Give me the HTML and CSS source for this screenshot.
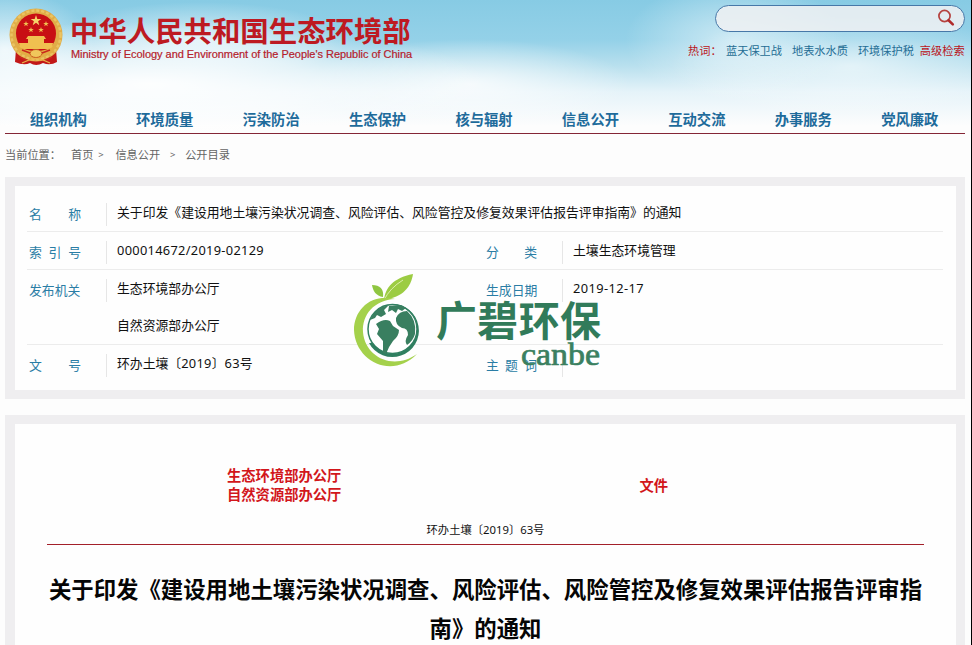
FILE: index.html
```html
<!DOCTYPE html>
<html lang="zh-CN">
<head>
<meta charset="utf-8">
<title>中华人民共和国生态环境部</title>
<link rel="stylesheet" href="styles.css">
</head>
<body>
<div class="page">
  <header class="header">
    <div class="masthead">
      <div class="brand">
        <svg class="emblem" viewBox="0 0 56 60" width="56" height="60" aria-hidden="true">
          <path d="M8 42 L7 55 Q16 59 22 56 Q28 60 35 56 Q42 59 49 55 L48 42 Z" fill="#c21818"/>
          <circle cx="28" cy="28" r="26.500" fill="#e0ad48"/>
          <circle cx="28" cy="28" r="24.500" fill="none" stroke="#ebc462" stroke-width="2.500" stroke-dasharray="3 2"/>
          <circle cx="28" cy="26.500" r="20" fill="#c80f14"/>
          <path d="M28 8l1.300 3.900h4.100l-3.300 2.400 1.200 3.900-3.300-2.400-3.300 2.400 1.200-3.900-3.300-2.400h4.100z" fill="#f6d56b"/>
          <g fill="#f0c050">
            <path id="s" d="M18 14l.7 1.900h2.100l-1.700 1.300.7 2-1.800-1.200-1.800 1.200.7-2-1.700-1.300h2.100z"/>
            <use href="#s" x="20"/><use href="#s" x="5" y="6"/><use href="#s" x="15" y="6"/>
            <path d="M20 29h16l2 3H18zM20 32h16v4H20zM11 36h34l-1 6H12z"/>
          </g>
          <path d="M9 39Q28 49 47 39L45 46Q36 47 34 50Q28 53 22 50Q19 47 11 46Z" fill="#e3ad43"/>
          <ellipse cx="28" cy="46.500" rx="6" ry="4" fill="#f0c75c" stroke="#c9581f"/>
          <path d="M12 50l9 4M44 50l-9 4M14 43l8 3M42 43l-8 3" stroke="#c9281d" stroke-width="1.500"/>
          <path d="M14 56l7-3M42 56l-7-3M21 53q7-3 14 0" fill="none" stroke="#e9b54b" stroke-width="1.300"/>
        </svg>
        <div class="brand-text">
          <div class="site-name">中华人民共和国生态环境部</div>
          <div class="site-en">Ministry of Ecology and Environment of the People's Republic of China</div>
        </div>
      </div>
      <div class="tools">
        <div class="search">
          <svg viewBox="0 0 18 18" width="18" height="18" aria-hidden="true"><circle cx="7.500" cy="7" r="5.600" fill="none" stroke="#b5423f" stroke-width="1.700"/><path d="M11.500 11.300l4.300 4.100" stroke="#b02b2b" stroke-width="2.600" stroke-linecap="round"/></svg>
        </div>
        <div class="hot"><span class="red hot-label">热词：</span><span>蓝天保卫战</span><span>地表水水质</span><span class="last">环境保护税</span><span class="red">高级检索</span></div>
      </div>
    </div>
    <nav class="nav"><a>组织机构</a><a>环境质量</a><a>污染防治</a><a>生态保护</a><a>核与辐射</a><a>信息公开</a><a>互动交流</a><a>办事服务</a><a>党风廉政</a></nav>
  </header>

  <div class="crumbs"><span class="here">当前位置：</span><span>首页</span><i class="near">&gt;</i><span>信息公开</span><i>&gt;</i><span>公开目录</span></div>

  <section class="panel info">
    <div class="row">
      <div class="label"><span>名</span><span>称</span></div>
      <div class="value wide">关于印发《建设用地土壤污染状况调查、风险评估、风险管控及修复效果评估报告评审指南》的通知</div>
    </div>
    <div class="row">
      <div class="label"><span>索</span><span>引</span><span>号</span></div>
      <div class="value num">000014672/2019-02129</div>
      <div class="label"><span>分</span><span>类</span></div>
      <div class="value">土壤生态环境管理</div>
    </div>
    <div class="row tall">
      <div class="label">发布机关</div>
      <div class="value">生态环境部办公厅<br>自然资源部办公厅</div>
      <div class="label">生成日期</div>
      <div class="value date">2019-12-17</div>
    </div>
    <div class="row">
      <div class="label"><span>文</span><span>号</span></div>
      <div class="value">环办土壤〔<span class="num">2019</span>〕<span class="num">63</span>号</div>
      <div class="label"><span>主</span><span>题</span><span>词</span></div>
      <div class="value"></div>
    </div>
    <svg class="watermark" viewBox="0 0 260 110" width="260" height="110">
      <path d="M32 30 C33 18 41 8 61 4 C59 17 51 27 32 30Z" fill="#9ccc43"/>
      <path d="M31 27 C24 26 21 21 20 15 C28 15 32 19 31 27Z" fill="#8fc641"/>
      <path d="M32 30Q38 18 51 10" fill="none" stroke="#dcecad"/>
      <path d="M43 29 C20 23 2 39 2 60 C3 91 40 110 65 84 C41 101 13 87 11 62 C10 45 22 30 43 29Z" fill="#a4d14b"/>
      <circle cx="40" cy="60" r="25" fill="#fff"/>
      <path d="M40 34A26.500 26.500 0 1 1 17 73A26 26 0 0 0 40 34Z" fill="#2f7f60"/>
      <circle cx="40.500" cy="59" r="24.500" fill="#fff" stroke="#2f7f60" stroke-width="1.500"/>
      <g fill="#397f60">
        <path d="M18 50Q23 37 37 35L32 40L34 44L29 47L25 45L23 48Z"/>
        <path d="M37 36L48 35L54 38L50 41L46 39L44 43L40 40L36 42Z"/>
        <path d="M24 54Q32 48 38 51L41 56L47 60Q47 66 41 71Q37 76 34 84L31 83L31 71L25 64L27 59Z"/>
        <path d="M44 48Q47 41 55 41Q65 50 63 64Q61 71 55 75Q52 71 56 65Q56 58 50 58Q43 55 44 48Z"/>
      </g>
      <text class="wm-cn" x="84" y="66" textLength="165">广碧环保</text>
      <text class="wm-en" x="169" y="95" textLength="79" lengthAdjust="spacingAndGlyphs">canbe</text>
    </svg>
  </section>

  <section class="panel doc">
    <div class="issuers">
      <div class="offices">生态环境部办公厅<br>自然资源部办公厅</div>
      <div class="kind">文件</div>
    </div>
    <div class="doc-no">环办土壤〔2019〕63号</div>
    <h1>关于印发《建设用地土壤污染状况调查、风险评估、风险管控及修复效果评估报告评审指<br>南》的通知</h1>
  </section>
</div>
</body>
</html>
```
FILE: styles.css
```css
* { box-sizing: border-box; }
body {
  margin: 0;
  background: #fdfdfd;
  font-family: "Noto Sans", "Noto Sans CJK SC", sans-serif;
  color: #111;
}
.page {
  height: 645px;
  overflow: hidden;
  padding: 0 6px 0 5px;
  border-right: 1px solid #000;
  background:
    radial-gradient(ellipse 340px 62px at 150px 84px, rgba(255,255,255,.95), rgba(255,255,255,.6) 50%, rgba(255,255,255,0)),
    radial-gradient(ellipse 150px 38px at 200px 40px, rgba(255,255,255,.65), rgba(255,255,255,0)),
    radial-gradient(ellipse 90px 60px at 5px 50px, rgba(255,255,255,.75), rgba(255,255,255,0)),
    radial-gradient(ellipse 160px 45px at 470px 84px, rgba(255,255,255,.75), rgba(255,255,255,0)),
    radial-gradient(ellipse 110px 60px at 735px 40px, rgba(255,255,255,.55), rgba(255,255,255,0)),
    radial-gradient(ellipse 180px 50px at 850px 66px, rgba(255,255,255,.6), rgba(255,255,255,0)),
    linear-gradient(#87cbe4 0, #94d1e8 40px, #b9e0ee 66px, #e5f3f9 92px, #fdfdfd 126px) 0 0 / 100% 132px no-repeat,
    #fdfdfd;
}
.header { height: 134px; border-bottom: 1.500px solid #842636; }
.masthead { height: 107px; display: flex; justify-content: space-between; }
.brand { display: flex; padding: 7px 0 0 3px; }
.brand-text { padding-left: 7px; }
.site-name {
  font: 700 28.4px/40px "Noto Sans CJK SC", sans-serif;
  color: #bd1a22;
  margin: 3px 0 0 -1px;
  height: 37px;
  white-space: nowrap;
}
.site-en {
  font: 11px/14px "Liberation Sans", sans-serif;
  letter-spacing: -.04px;
  color: #b5202b;
  -webkit-text-stroke: .2px #b5202b;
  white-space: nowrap;
}
.tools { width: 277px; padding-top: 5px; }
.search {
  width: 250px;
  height: 27px;
  margin-left: 27px;
  border: 1px solid #4778a8;
  border-radius: 14px;
  background: rgba(238,240,242,.88);
  display: flex;
  justify-content: flex-end;
  padding: 3px 9px 0 0;
}
.hot {
  display: flex;
  margin-top: 10px;
  font-size: 11.2px;
  line-height: 18px;
  color: #246d94;
  white-space: nowrap;
}
.hot span { margin-right: 10px; }
.hot .hot-label { width: 38px; margin-right: 0; }
.hot .last { margin-right: 6px; }
.hot .red:last-child { margin-right: 0; }
.hot .red { color: #ba1420; }
.nav { display: flex; height: 25px; width: 958px; }
.nav a {
  flex: 1;
  text-align: center;
  font-size: 14.3px;
  font-weight: 700;
  line-height: 25px;
  color: #1e6b9b;
}
.crumbs {
  display: flex;
  height: 43px;
  font-size: 11.2px;
  line-height: 41px;
  color: #646464;
}
.crumbs .here { width: 66px; }
.crumbs i { font-style: normal; font-size: 9.5px; width: 25px; text-align: center; }
.crumbs .near { width: 22px; padding-right: 7px; }
.panel { border: 9px solid #efeef0; border-left-width: 10px; background: #fefefe; width: 960px; }
.info { position: relative; height: 222px; padding: 8px 13px 0 12px; }
.row {
  display: flex;
  height: 38px;
  border-bottom: 1px solid #ececec;
  line-height: 37px;
  font-size: 12.83px;
}
.row.tall { height: 75px; }
.row:nth-child(4) { border-bottom: 0; }
.label {
  width: 80px;
  height: 23px;
  margin-top: 9px;
  padding: 0 25px 0 2px;
  border-right: 1px solid #e6e6e6;
  display: flex;
  justify-content: space-between;
  line-height: 23px;
  color: #2a7da5;
  white-space: nowrap;
}
.value { width: 377px; padding-left: 10px; white-space: nowrap; }
.value.wide { width: auto; }
.num { letter-spacing: .3px; }
.date { letter-spacing: .4px; }
.row .value + .label { width: 79px; }
.watermark { position: absolute; left: 337px; top: 84px; pointer-events: none; }
.wm-cn { font: 700 41px "Noto Sans CJK SC", sans-serif; fill: #317b5a; }
.wm-en { font: 400 31px "Liberation Serif", serif; fill: #3a8060; stroke: #3a8060; stroke-width: .7px; }
.doc { margin-top: 16px; height: 240px; padding: 0 32px; text-align: center; }
.issuers {
  display: flex;
  height: 94px;
  padding: 42px 0 0 180px;
  font-size: 14.3px;
  font-weight: 700;
  line-height: 19px;
  color: #d2161b;
}
.kind { margin-left: 298px; padding-top: 10px; }
.doc-no {
  height: 27px;
  border-bottom: 1px solid #a3202a;
  font-size: 11.3px;
  line-height: 24px;
}
h1 {
  margin: 25px -10px 0;
  font-size: 22.4px;
  font-weight: 700;
  line-height: 39px;
  color: #050505;
  white-space: nowrap;
}
```
